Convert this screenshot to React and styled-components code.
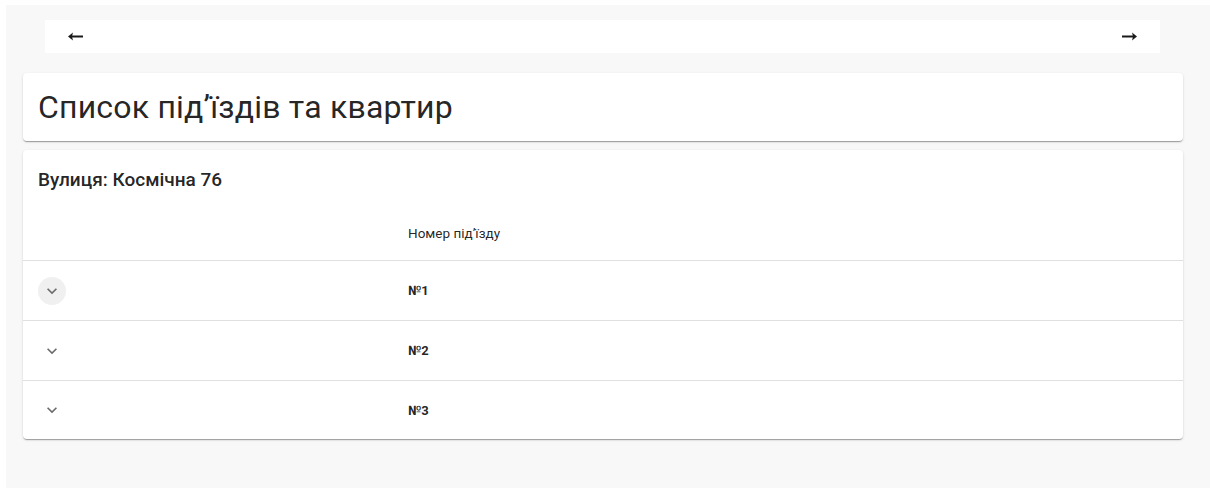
import React, { useState } from 'react'
import styled, { createGlobalStyle } from 'styled-components'

const GlobalStyle = createGlobalStyle`
  html, body {
    margin: 0;
    background: #ffffff;
    font-family: Roboto, "Liberation Sans", sans-serif;
    color: rgba(0, 0, 0, 0.87);
  }
`

const Page = styled.main`
  margin: 5px 0 0 6px;
  min-height: calc(100vh - 5px);
  background: #f8f8f8;
  padding-top: 15px;
  box-sizing: border-box;
`

const Pager = styled.nav`
  margin: 0 50px 0 39px;
  height: 33px;
  background: #ffffff;
  display: flex;
  align-items: center;
  justify-content: space-between;
  padding: 0 23px;
`

const ArrowButton = styled.button`
  border: none;
  background: none;
  padding: 0;
  display: flex;
  cursor: pointer;
  color: #1a1a1a;
`

const Paper = styled.section`
  margin: ${props => props.top}px 27px 0 17px;
  background: #ffffff;
  border-radius: 4px;
  box-shadow: 0px 2px 1px -1px rgba(0, 0, 0, 0.2), 0px 1px 1px 0px rgba(0, 0, 0, 0.14),
    0px 1px 3px 0px rgba(0, 0, 0, 0.12);
`

const Title = styled.h1`
  margin: 0;
  height: 68px;
  display: flex;
  align-items: center;
  padding: 0 15px;
  font-size: 32px;
  font-weight: 400;
  letter-spacing: 0.2px;
  color: rgba(0, 0, 0, 0.87);
`

const Street = styled.h2`
  margin: 0;
  padding: 18px 15px 0;
  height: 40px;
  font-size: 19px;
  font-weight: 500;
  line-height: 24px;
  box-sizing: border-box;
`

const Table = styled.div`
  display: grid;
  grid-template-columns: 369px 1fr;
`

const Cell = styled.div`
  display: flex;
  align-items: center;
  height: ${props => (props.last ? 58 : 59)}px;
  padding: 0 16px;
  border-bottom: ${props => (props.last ? 'none' : '1px solid rgb(224, 224, 224)')};
  font-size: 13px;
  font-weight: 700;
  color: rgba(0, 0, 0, 0.87);
`

const HeadCell = styled(Cell)`
  height: 54px;
  padding-top: 16px;
  font-size: 13.5px;
  font-weight: 400;
`

const ExpandButton = styled.button`
  width: 28px;
  height: 28px;
  margin-left: -1px;
  border: none;
  border-radius: 50%;
  padding: 0;
  display: flex;
  align-items: center;
  justify-content: center;
  cursor: pointer;
  background: ${props => (props.active ? 'rgba(0, 0, 0, 0.06)' : 'transparent')};
  color: #6b6b6b;
`

const Chevron = () => (
  <svg width="20" height="20" viewBox="0 0 24 24">
    <path d="M7.41 8.59 12 13.17l4.59-4.58L18 10l-6 6-6-6z" fill="currentColor" />
  </svg>
)

const Arrow = ({ flip }) => (
  <svg width="15" height="9" viewBox="0 0 15 9" style={flip ? { transform: 'scaleX(-1)' } : undefined}>
    <path d="M0 4.5 5 0.5 4.2 3.6H15v1.8H4.2L5 8.5z" fill="currentColor" />
  </svg>
)

const entrances = ['№1', '№2', '№3']

const App = () => {
  const [focused] = useState(0)

  return (
    <>
      <GlobalStyle />
      <Page>
        <Pager>
          <ArrowButton aria-label="back">
            <Arrow />
          </ArrowButton>
          <ArrowButton aria-label="forward">
            <Arrow flip />
          </ArrowButton>
        </Pager>

        <Paper top={20}>
          <Title>Список підʼїздів та квартир</Title>
        </Paper>

        <Paper top={9}>
          <Street>Вулиця: Космічна 76</Street>
          <Table>
            <HeadCell />
            <HeadCell>Номер підʼїзду</HeadCell>
            {entrances.map((name, i) => {
              const last = i === entrances.length - 1
              return (
                <React.Fragment key={name}>
                  <Cell last={last}>
                    <ExpandButton active={i === focused}>
                      <Chevron />
                    </ExpandButton>
                  </Cell>
                  <Cell last={last}>{name}</Cell>
                </React.Fragment>
              )
            })}
          </Table>
        </Paper>
      </Page>
    </>
  )
}

export default App
